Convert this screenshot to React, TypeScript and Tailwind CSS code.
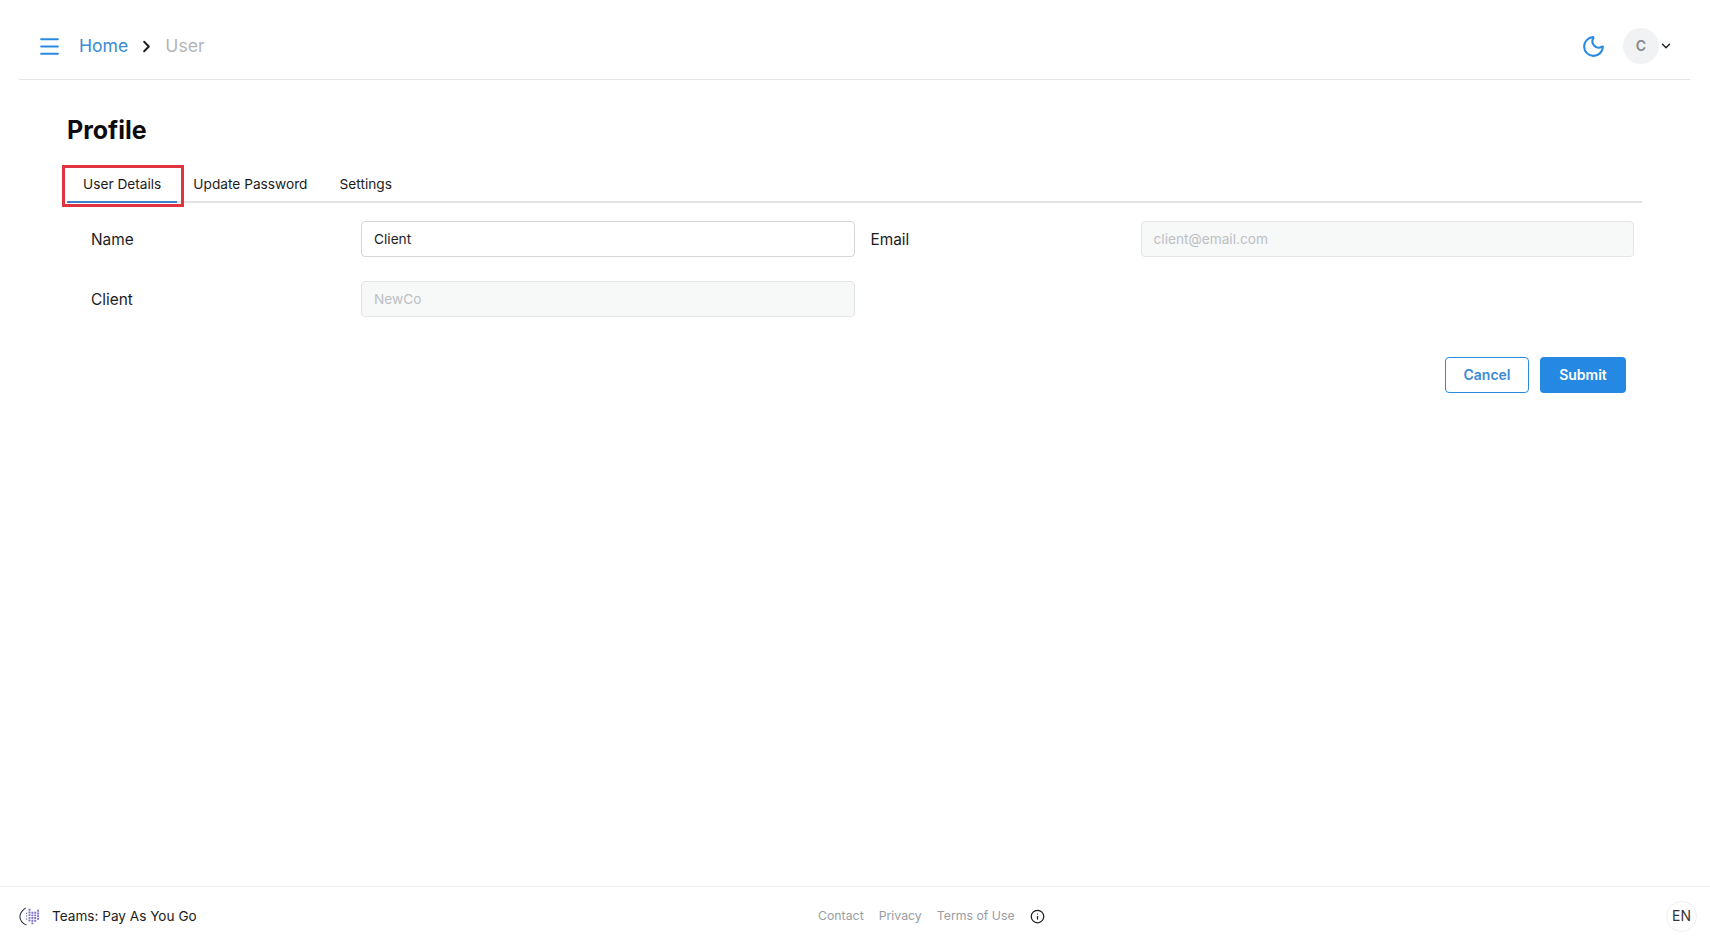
import { ChevronDown, ChevronRight, Info, Menu, Moon } from "lucide-react";
import type { ReactNode } from "react";

const font = { fontFamily: "Inter, 'Liberation Sans', sans-serif" };

function Logo() {
  return (
    <svg viewBox="0 0 24 22" className="size-[23px]" fill="none">
      <path d="M8 2 C4 5 2 8 2 11 C2 14 4 18 9 20" stroke="#2b2f45" strokeWidth="1.1" />
      <path d="M9 7v1M9 10v1M9 13v1" stroke="#4b4f75" strokeWidth="1.3" />
      <path d="M12 3v14M15 6v13M18 6v11M21 4v11" stroke="#7e72c6" strokeWidth="2" strokeDasharray="2 0.8" />
    </svg>
  );
}

function Field({ label, value, disabled }: { label: string; value: string; disabled?: boolean }) {
  return (
    <div className="grid grid-cols-[270px_1fr] items-center">
      <label className="pt-px text-[15.4px] text-[#1c1c1e]">{label}</label>
      <div
        className={
          disabled
            ? "flex h-9 items-center rounded border border-[#e3e5e7] bg-[#f7f8f8] px-3 pt-px text-[13.7px] text-[#bcbfc3]"
            : "flex h-9 items-center rounded border border-[#d4d6d9] bg-white px-3 pt-px text-[13.7px] text-[#1c1c1e]"
        }
      >
        {value}
      </div>
    </div>
  );
}

function Tab({ children, active }: { children: ReactNode; active?: boolean }) {
  return (
    <div
      className={
        active
          ? "-mb-0.5 flex h-[39px] items-center border-y-2 border-t-transparent border-b-[#3b82c4] px-4 pt-0.5 text-[13.7px] text-[#1c1c1e]"
          : "-mb-0.5 flex h-[39px] items-center border-y-2 border-transparent px-4 pt-0.5 text-[13.7px] text-[#1c1c1e]"
      }
    >
      {children}
    </div>
  );
}

export default function App() {
  return (
    <div className="flex h-screen flex-col bg-white" style={font}>
      <header className="mx-[19px] mr-5 flex h-[80px] shrink-0 items-center border-b border-[#e2e3e5] pl-[18px] pr-[17px] pt-[13px]">
        <Menu className="size-[25px] text-[#2b8ae0]" strokeWidth={2} />
        <a className="ml-[17px] text-[17.6px] text-[#3b8bd4]">Home</a>
        <ChevronRight className="ml-[9px] size-[19px] text-[#1c1c1e]" strokeWidth={2.4} />
        <span className="ml-[9px] text-[17.6px] text-[#b3b5b8]">User</span>
        <div className="ml-auto flex items-center">
          <Moon className="size-[25px] text-[#2b8ae0]" strokeWidth={2} />
          <div className="ml-[17px] flex size-9 items-center justify-center rounded-full bg-[#f1f2f3] text-sm font-semibold text-[#85888c]">
            C
          </div>
          <ChevronDown className="size-[14px] text-[#1c1c1e]" strokeWidth={2.4} />
        </div>
      </header>

      <main className="relative flex-1 pl-[67px] pr-[68px]">
        <h1 className="mt-[32px] text-[25px] font-bold leading-9 text-[#0c0c0e]">Profile</h1>
        <div className="mt-[16px] flex border-b-2 border-[#e2e3e5]">
          <Tab active>User Details</Tab>
          <Tab>Update Password</Tab>
          <Tab>Settings</Tab>
        </div>
        {/* Red annotation box drawn over the active tab. */}
        <div className="absolute left-[62px] top-[85px] h-[42px] w-[122px] border-[3px] border-[#e0343f]" />

        <div className="mt-[18px] grid grid-cols-2 gap-x-4 gap-y-6 pl-6 pr-2">
          <Field label="Name" value="Client" />
          <Field label="Email" value="client@email.com" disabled />
          <Field label="Client" value="NewCo" disabled />
        </div>

        <div className="mt-10 flex justify-end gap-[11px] pr-4">
          <button className="h-9 w-[84px] rounded border border-[#2b8ae0] bg-white text-sm font-semibold text-[#3b8bd4]">
            Cancel
          </button>
          <button className="h-9 w-[86px] rounded bg-[#2589e3] text-sm font-semibold text-white">
            Submit
          </button>
        </div>
      </main>

      <footer className="relative flex h-[59px] shrink-0 items-center justify-between border-t border-[#f1f2f3] pl-[18px] pr-[13px]">
        <div className="flex items-center gap-[11px]">
          <Logo />
          <span className="pt-px text-[13.6px] text-[#1c1c1e]">Teams: Pay As You Go</span>
        </div>
        <div className="flex items-center pt-px text-[12.3px] text-[#9a9da1]">
          <a>Contact</a>
          <a className="ml-[15px]">Privacy</a>
          <a className="ml-[15px]">Terms of Use</a>
          <Info className="ml-[15px] size-[15px] text-[#1c1c1e]" strokeWidth={2} />
        </div>
        <div className="flex size-[31px] items-center justify-center rounded-full border border-[#eeeff0] text-sm text-[#333538]">
          EN
        </div>
      </footer>
    </div>
  );
}
